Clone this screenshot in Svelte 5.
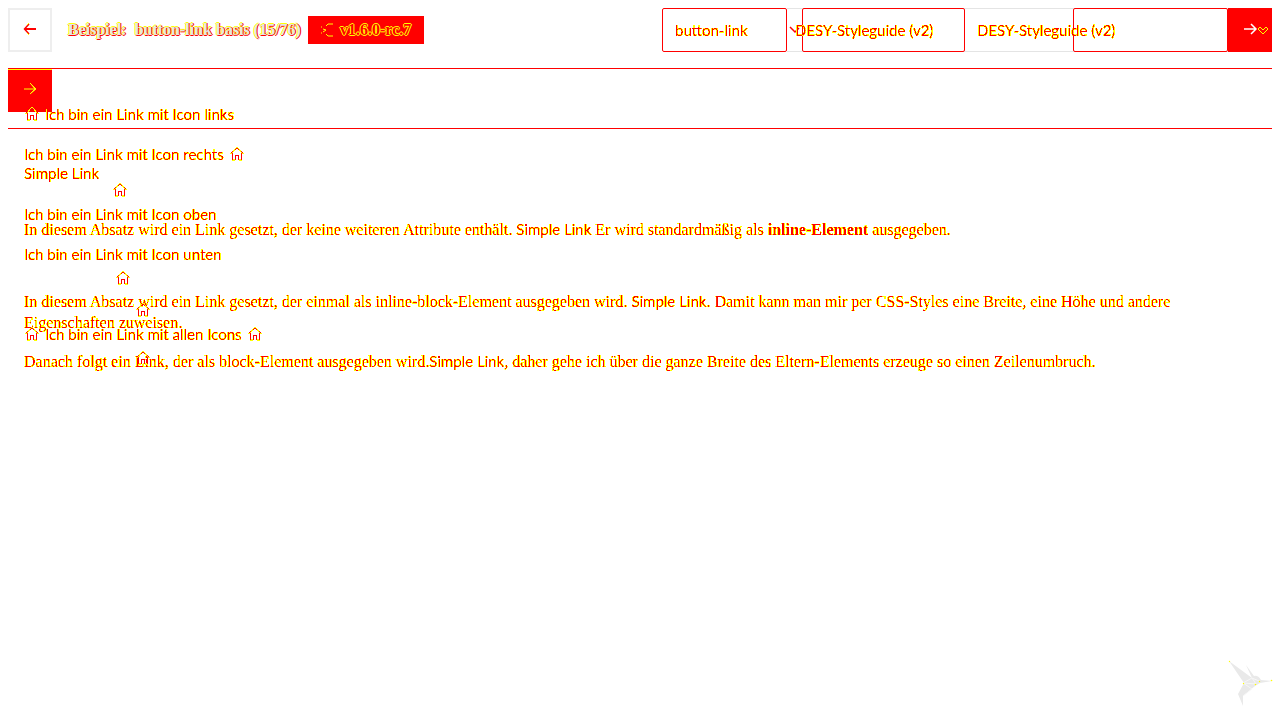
<script>
  const examples = ['button-link'];
  const guides = ['DESY-Styleguide (v2)'];
  const links = [
    { text: 'Ich bin ein Link mit Icon links', left: true },
    { text: 'Ich bin ein Link mit Icon rechts', right: true },
    { text: 'Ich bin ein Link mit Icon oben', top: true },
    { text: 'Ich bin ein Link mit Icon unten', bottom: true },
    { text: 'Ich bin ein Link mit allen Icons', left: true, right: true, top: true, bottom: true }
  ];
</script>

{#snippet house()}
  <svg class="house" viewBox="0 0 16 16" aria-hidden="true">
    <path d="M1.5 7.5 8 2l6.5 5.5" /><path d="M3.500 6.500v7.500h2.500M12.500 6.500v7.500h-2.500M6.500 14V9.500h3V14" />
  </svg>
{/snippet}

<!-- Splits glyph coverage into a solid core and a contrasting edge -->
<svg class="defs" width="0" height="0" aria-hidden="true">
  <filter id="edge" x="-5%" y="-20%" width="110%" height="140%" color-interpolation-filters="sRGB">
    <feComponentTransfer in="SourceAlpha" result="wide">
      <feFuncA type="linear" slope="40" intercept="-1" />
    </feComponentTransfer>
    <feFlood flood-color="#ff0" />
    <feComposite operator="in" in2="wide" result="outer" />
    <feComponentTransfer in="SourceAlpha" result="core">
      <feFuncA type="linear" slope="20" intercept="-13" />
    </feComponentTransfer>
    <feFlood flood-color="#f00" />
    <feComposite operator="in" in2="core" result="inner" />
    <feMerge><feMergeNode in="outer" /><feMergeNode in="inner" /></feMerge>
  </filter>
</svg>

<div class="page">
  <header>
    <button class="square back" aria-label="Zurück">
      <svg viewBox="0 0 16 16"><path d="M14 7H3" stroke="#f00" stroke-width="2" /><path d="M7 2 2.500 7 7 12" stroke="#f00" stroke-width="1.500" /><path d="M7 1 5 3M7 13l-2-2" stroke="#ff0" /></svg>
    </button>
    <h1>Beispiel: &nbsp;button-link basis (15/76)</h1>
    <span class="tag">
      <svg viewBox="0 0 16 16"><path d="M1 5h1M1 11h1M3 7l3 1-3 2M6 4l2-2h5M6 12l2 2h5" /></svg>
      v1.6.0-rc.7
    </span>
    <div class="controls">
      <div class="row">
        <span class="field first"><select class="edge" aria-label="Komponente">{#each examples as e}<option>{e}</option>{/each}</select></span>
        <span class="field second"><select class="edge" aria-label="Styleguide">{#each guides as g}<option>{g}</option>{/each}</select></span>
        <span class="field third"><select class="edge" aria-label="Vergleich">{#each guides as g}<option>{g}</option>{/each}</select></span>
        <button class="square next" aria-label="Weiter">
          <svg viewBox="0 0 28 16"><path d="M0 7h11M7 2l5 5-5 5" stroke="#fff" stroke-width="1.500" /><path d="m14 7 2-2 3 3 3-3 2 2-5 5z" stroke="#ff0" /></svg>
        </button>
      </div>
      <div class="row outlines" aria-hidden="true">
        <svg class="chevron" viewBox="0 0 15 16"><path d="m3 5 5 5 4-4" /></svg>
        <i class="box near"></i>
        <i class="box far"></i>
      </div>
    </div>
  </header>

  <main>
    <section class="text">
      <div class="bar">
        <button class="square lower" aria-label="Weiter">
          <svg viewBox="0 0 16 16"><path d="M0 6h11M6 0l6 6-6 5M7 1l4 5-4 4" stroke="#ff0" /></svg>
        </button>
      </div>
      <div class="prose">
        <p class="edge"><a href="#simple">Simple Link</a></p>
        <p class="edge inline">In diesem Absatz wird ein Link gesetzt, der keine weiteren Attribute enthält. <a href="#inline">Simple Link</a> Er wird standardmäßig als <strong>inline-Element</strong> ausgegeben.</p>
        <p class="edge styled">In diesem Absatz wird ein Link gesetzt, der einmal als inline-block-Element ausgegeben wird. <a href="#styled">Simple Link</a>. Damit kann man mir per CSS-Styles eine Breite, eine Höhe und andere Eigenschaften zuweisen.</p>
        <p class="edge block">Danach folgt ein Link, der als block-Element ausgegeben wird.<a href="#block">Simple Link</a>, daher gehe ich über die ganze Breite des Eltern-Elements erzeuge so einen Zeilenumbruch.</p>
      </div>
    </section>

    <section class="links">
      {#each links as link}
        <a class="edge" href="#link">
          {#if link.top}{@render house()}{/if}
          <span class="label">
            {#if link.left}{@render house()}{/if}
            <span>{link.text}</span>
            {#if link.right}{@render house()}{/if}
          </span>
          {#if link.bottom}{@render house()}{/if}
        </a>
      {/each}
    </section>
  </main>

  <svg class="bird" viewBox="0 0 46 46" aria-hidden="true">
    <path class="body" d="M1 1 24 18 18 5 26 16q4-1 7 4l11 1-12 2-5 3-12 10v10l-5-12 6-11z" />
    <path class="seam" d="m15 23 9-5 4 6M15 23l13 1M31 21l-7-3M15 23l9 6-9 7" />
    <g fill="#ff0"><circle cx="1.500" cy="1.500" r=".7" /><circle cx="15.500" cy="23.500" r=".7" /><circle cx="27.500" cy="24.500" r=".8" /><circle cx="31.500" cy="21.500" r=".7" /><circle cx="43.500" cy="20.500" r=".8" /></g>
  </svg>
</div>

<style>
  :global(body) { background: #fff; }
  .page { padding: 8px; color: #f00; font: 15px/24px "Lato", sans-serif; }
  .defs { position: absolute; }
  svg { fill: none; }
  a { color: inherit; text-decoration: none; }
  .edge { filter: url(#edge); }
  header { display: flex; align-items: center; }
  .square { box-sizing: border-box; width: 44px; height: 44px; flex: none; padding: 0 16px; border: 0; background: #f00; display: flex; align-items: center; }
  .square svg { width: 16px; height: 16px; flex: none; }
  .back { background: #fff; border: 2px solid #eee; padding: 0 12px; }
  .square.next svg { width: 28px; }
  h1 { width: 232px; margin: 0 8px 0 16px; font: bold 16px/24px "Liberation Serif", serif; white-space: nowrap; color: #e4e4e4; text-shadow: 1px 0 #f00, -1px 0 #ff0, 0 1px #f00, 0 -1px #ff0; }
  .tag { box-sizing: border-box; width: 116px; height: 28px; padding: 0 12px; display: flex; align-items: center; gap: 4px; background: #f00; color: #f00; font: bold 16px/24px "Liberation Serif", serif; white-space: nowrap; text-shadow: 1px 0 #ff0, -1px 0 #ff0, 0 1px #ff0, 0 -1px #ff0; }
  .tag svg { width: 16px; height: 16px; stroke: #ff0; flex: none; }
  .controls { display: grid; margin-left: auto; }
  .row { grid-area: 1 / 1; display: flex; }
  .field { box-sizing: border-box; height: 44px; border: 1px solid #e4e4e4; border-width: 1px 0; display: flex; align-items: center; }
  .first { width: 125px; border: 1px solid #f00; border-radius: 2px; padding-left: 12px; }
  .second { width: 178px; padding-left: 8px; }
  .third { width: 263px; padding-left: 12px; }
  select { appearance: none; border: 0; padding: 0; background: none; color: #f00; font: 15px/24px "Lato", sans-serif; }
  .outlines { pointer-events: none; padding-right: 44px; justify-content: flex-end; align-items: center; }
  .chevron { width: 15px; height: 16px; stroke: #f00; stroke-width: 1.5; }
  .box { box-sizing: border-box; height: 44px; border: 1px solid #f00; border-radius: 2px; }
  .near { width: 163px; margin-right: 108px; }
  .far { width: 155px; }
  main { display: grid; }
  .text, .links { grid-area: 1 / 1; margin-top: 16px; }
  .bar { box-sizing: border-box; height: 61px; padding-top: 1px; border-bottom: 1px solid #f00; }
  .lower { height: 43px; border-top: 1px solid #ff0; }
  .prose { padding: 34px 16px 0; font: 16px/21px "Liberation Serif", serif; }
  .prose a { font: 15px/20px "Lato", sans-serif; }
  p { margin: 0; }
  .inline { margin-top: 35px; }
  .styled { margin-top: 51px; }
  .block { margin-top: 18px; }
  .links { position: relative; border-top: 1px solid #f00; padding: 33px 16px 0; display: flex; flex-direction: column; align-items: flex-start; gap: 16px; }
  .links a { display: flex; flex-direction: column; align-items: center; gap: 4px; }
  .label { display: flex; align-items: center; gap: 5px; white-space: nowrap; }
  .house { width: 16px; height: 16px; stroke: #f00; flex: none; }
  .bird { position: fixed; right: 6px; bottom: 14px; width: 46px; height: 46px; }
  .body { fill: #e9e9e9; }
  .seam { stroke: #f7f7f7; }
</style>
